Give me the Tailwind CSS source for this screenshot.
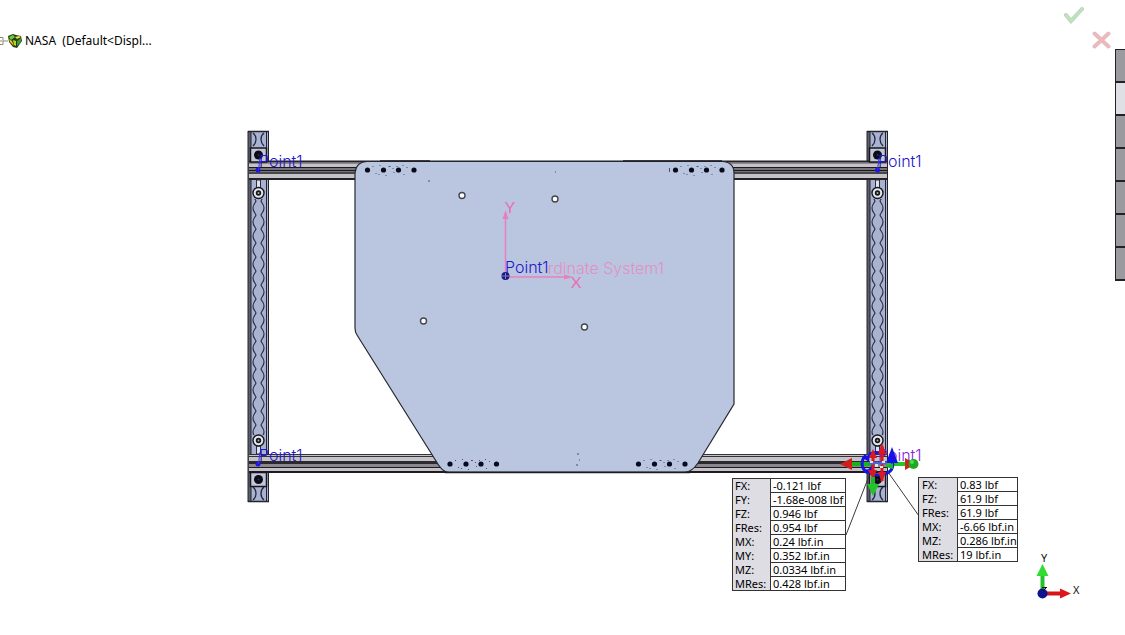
<!DOCTYPE html>
<html lang="en">
<head>
    <meta charset="UTF-8">
    <meta name="viewport" content="width=device-width, initial-scale=1.0">
    <title>NASA - Free Body Forces</title>
    <script src="https://cdn.jsdelivr.net/npm/@tailwindcss/browser@4"></script>
</head>
<body class="bg-white text-black font-['Noto_Sans',sans-serif]">
    <main class="relative min-h-screen overflow-hidden">

        <!-- Graphics area -->
        <svg class="absolute inset-0 w-full h-full" viewBox="0 0 1125 635" fill="none">
            <defs>
                <pattern id="chain" width="21" height="14" patternUnits="userSpaceOnUse">
                    <path d="M8 0C7.500 2 5 3 5 7C5 11 7.500 12 8 14 M13 0C13.500 2 16 3 16 7C16 11 13.500 12 13 14" stroke="#2b2e48" stroke-width="1.2" fill="none"/>
                </pattern>
                <!-- upright, drawn from its top left corner -->
                <g id="upright">
                    <rect x="0" y="0" width="21" height="371" fill="#a9b3cf"/>
                    <rect x="0" y="0" width="3" height="371" fill="#5c5f6b"/>
                    <path d="M0 0V371 M3 0V371 M18.500 0V371 M20.500 0V371" stroke="#22232d"/>
                    <path d="M0 0.500H21 M0 370.500H21" stroke="#22232d" stroke-width="1.5"/>
                    <rect x="4" y="68" width="14" height="236" fill="url(#chain)"/>
                    <path d="M5 2C9 5 9 11 5 15 M16 2C12 5 12 11 16 15 M5 356C9 359 9 366 5 369 M16 356C12 359 12 366 16 369" stroke="#23263f" stroke-width="1.3"/>
                </g>
                <g id="nut">
                    <rect x="-8" y="-7" width="16" height="14" fill="#c3c6d6" stroke="#16171f" stroke-width="1.5"/>
                    <circle r="4.5" fill="#0b0c18"/>
                    <circle r="1" fill="#26305c"/>
                </g>
                <g id="washer">
                    <circle r="5.5" fill="#e4e6ec" stroke="#15161c" stroke-width="1.4"/>
                    <circle r="2.7" fill="#15161c"/>
                    <circle r="1" fill="#a8b59c"/>
                </g>
                <g id="bolts" fill="#090b1c">
                    <circle cx="0" cy="0" r="2.6"/>
                    <circle cx="16" cy="0" r="2.6"/>
                    <circle cx="31" cy="0" r="2.6"/>
                    <circle cx="46.500" cy="0" r="2.6"/>
                    <path d="M5 -4h1v1h-1z M8 3h1v1h-1z M12 -5h1v1h-1z M11 4h1v1h-1z M21 -4h2v1h-2z M25 -2h1v1h-1z M26 2h1v1h-1z M35 -5h1v1h-1z M36 4h1v1h-1z M39 -3h1v1h-1z M18 5h1v1h-1z M29 -4h1v1h-1z" fill="#4c5370"/>
                </g>
            </defs>

            <use href="#upright" x="248" y="131"/>
            <use href="#upright" x="867" y="131"/>

            <!-- top rail -->
            <rect x="249" y="161" width="638" height="19" fill="#c5c3c7"/>
            <path d="M249 161.500H887 M249 179H887" stroke="#232327" stroke-width="2"/>
            <path d="M249 163.500H887" stroke="#8d8b90"/>
            <rect x="249" y="167" width="638" height="7" fill="#77757b"/>
            <path d="M249 167.500H887 M249 170.500H887 M249 173H887" stroke="#19191d"/>

            <!-- bottom rail -->
            <rect x="249" y="454" width="638" height="19" fill="#c5c3c7"/>
            <path d="M249 454.500H887 M249 456.500H887" stroke="#333338"/>
            <rect x="249" y="461" width="638" height="7" fill="#8a888d"/>
            <rect x="249" y="461" width="638" height="3" fill="#2a2a2e"/>
            <path d="M249 467.500H887" stroke="#1c1c20"/>
            <path d="M249 472H887" stroke="#1c1c20" stroke-width="2"/>

            <!-- plate -->
            <path d="M367 161.500H722Q734 162 734 173V404L698 463Q692 472 685 472H448Q442 472 436 461L357 335Q355 332 355 328V173Q356 162 367 161.500Z" fill="#bac6e0" stroke="#26282f" stroke-width="1.2"/>
            <path d="M380 161H430 M623 161H722 M445 472.500H690" stroke="#1c1c22" stroke-width="1.5"/>
            <use href="#bolts" x="367.500" y="170"/>
            <use href="#bolts" x="675.500" y="170"/>
            <use href="#bolts" x="450" y="464"/>
            <use href="#bolts" x="638.500" y="464"/>
            <path d="M669.500 168v4 M555 172h1 M428 181h2 M577 454h2 M579 460h1 M576 465h2" stroke="#4a5068"/>
            <g fill="#fff" stroke="#42464f" stroke-width="1.400">
                <circle cx="462" cy="195.500" r="3"/>
                <circle cx="555" cy="199" r="3"/>
                <circle cx="423.500" cy="321" r="3"/>
                <circle cx="584.500" cy="327" r="3"/>
            </g>

            <!-- fasteners -->
            <use href="#nut" x="258.500" y="155"/>
            <use href="#nut" x="877.500" y="155"/>
            <use href="#nut" x="258.500" y="479.500"/>
            <use href="#nut" x="877.500" y="479.500"/>
            <path d="M256.500 180v8h4v-8z M875.500 180v8h4v-8z M256.500 446v8h4v-8z M875.500 446v8h4v-8z" fill="#dfe3ee" stroke="#2a2d40"/>
            <use href="#washer" x="258.500" y="193"/>
            <use href="#washer" x="877.500" y="193"/>
            <use href="#washer" x="258.500" y="440.500"/>
            <use href="#washer" x="877.500" y="440.500"/>

            <!-- coordinate system -->
            <g stroke="#ea7fc0" stroke-width="1.500">
                <path d="M505.500 275V213 M508 277H568"/>
                <path d="M505.500 210l-3 9h6z M573 277l-9-2.500v5z" fill="#ea7fc0" stroke="none"/>
            </g>
            <g class="font-['Lato',sans-serif] text-[16px]" fill="#e96fb2">
                <text x="505" y="213">Y</text>
                <text x="571" y="288">X</text>
            </g>
            <text class="font-['Inter',sans-serif] text-[16px] font-light" x="664" y="274" text-anchor="end" fill="#e38fc4">rdinate System1</text>
            <circle cx="505.500" cy="276" r="4" fill="#1a1a78"/>
            <path d="M502 276h7 M505.500 273v6" stroke="#7f7fd0"/>

            <!-- reference points -->
            <g fill="#1f16e6">
                <circle cx="258" cy="170" r="2.500"/>
                <circle cx="877.500" cy="170" r="2.500"/>
                <circle cx="258" cy="464" r="2.500"/>
            </g>
            <path d="M258.500 170L260 158 M877.500 170L879 158 M258.500 464L260 452" stroke="#3a34e0"/>
            <g class="font-['Inter',sans-serif] text-[16px] font-light" fill="#2415cf">
                <text x="259" y="167">Point1</text>
                <text x="878" y="167">Point1</text>
                <text x="505" y="273">Point1</text>
                <text x="259" y="461">Point1</text>
                <text x="878" y="461" fill="#8424e2">Point1</text>
            </g>

            <!-- callout leaders -->
            <path d="M846 535L869 476 M888 472L919 516" stroke="#3c3c40"/>

            <!-- force and moment arrows -->
            <path d="M852 462h25v4h-25z" fill="#18b41c"/>
            <path d="M840 464l12-6v12z" fill="#cf1d17"/>
            <path d="M886 462h20v4h-20z" fill="#20c925"/>
            <path d="M905 458l11 6-11 6z" fill="#c8261b"/>
            <circle cx="913.500" cy="464" r="5" fill="#1fa622"/>
            <circle cx="912" cy="462" r="2" fill="#48e04c"/>
            <path d="M866 455C860 461 861 469 868 473 M869 454C874 452 878 452 882 453 M889 457C895 463 894 471 885 474 M866 470C871 475 878 476 885 474" stroke="#1417dd" stroke-width="3"/>
            <path d="M892 447l-6 16h12z" fill="#1511e8"/>
            <path d="M863 458l7-4-1 8z M866 472l6-7 2 8z" fill="#1511e8"/>
            <path d="M873 452v25 M882 446v35" stroke="#dc171c" stroke-width="3"/>
            <path d="M882 443l-4 11h8z M873 449l-4 9h8z M873 479l-5-9h9z M882 482l-4-10h8z" fill="#d91a22"/>
            <path d="M873 477v10" stroke="#1eb723" stroke-width="4"/>
            <path d="M873 496l-6-12h12z" fill="#23c428"/>
            <path d="M869 463h18" stroke="#5360cf" stroke-width="3"/>
            <path d="M870 461h3v2h-3z M875 464h3v3h-3z M882 461h3v2h-3z M880 466h3v2h-3z" fill="#dbe5f2"/>
            <path d="M886 467l7-4v6z" fill="#20b925"/>

            <!-- view triad -->
            <path d="M1042.500 591V574" stroke="#23c42a" stroke-width="4"/>
            <path d="M1042.500 564l-6 12h12z" fill="#30dc32"/>
            <path d="M1045 593.500h16" stroke="#d3141b" stroke-width="4"/>
            <path d="M1071 593.500l-11-5v10z" fill="#dd171c"/>
            <circle cx="1042.500" cy="593.500" r="5" fill="#11128e"/>
            <path d="M1042 587.500h5 M1046 588l-3 3" stroke="#111"/>
            <g class="font-['Noto_Sans',sans-serif] text-[11px]" fill="#111">
                <text x="1041" y="562">Y</text>
                <text x="1073" y="594">X</text>
            </g>

            <!-- result callouts -->
            <foreignObject x="732" y="478" width="114" height="115">
                <table class="w-full border-collapse border border-[#333] bg-white text-[11px] leading-[13px]" aria-label="Reaction force and moment">
                    <tbody>
                        <tr class="h-[14px]"><th class="w-[38px] bg-[#dedde4] border-r border-[#333] p-0 pl-[2px] text-left font-normal" scope="row">FX:</th><td class="border border-[#333] p-0 pl-[2px] whitespace-nowrap">-0.121 lbf</td></tr>
                        <tr class="h-[14px]"><th class="bg-[#dedde4] border-r border-[#333] p-0 pl-[2px] text-left font-normal" scope="row">FY:</th><td class="border border-[#333] p-0 pl-[2px] whitespace-nowrap">-1.68e-008 lbf</td></tr>
                        <tr class="h-[14px]"><th class="bg-[#dedde4] border-r border-[#333] p-0 pl-[2px] text-left font-normal" scope="row">FZ:</th><td class="border border-[#333] p-0 pl-[2px] whitespace-nowrap">0.946 lbf</td></tr>
                        <tr class="h-[14px]"><th class="bg-[#dedde4] border-r border-[#333] p-0 pl-[2px] text-left font-normal" scope="row">FRes:</th><td class="border border-[#333] p-0 pl-[2px] whitespace-nowrap">0.954 lbf</td></tr>
                        <tr class="h-[14px]"><th class="bg-[#dedde4] border-r border-[#333] p-0 pl-[2px] text-left font-normal" scope="row">MX:</th><td class="border border-[#333] p-0 pl-[2px] whitespace-nowrap">0.24 lbf.in</td></tr>
                        <tr class="h-[14px]"><th class="bg-[#dedde4] border-r border-[#333] p-0 pl-[2px] text-left font-normal" scope="row">MY:</th><td class="border border-[#333] p-0 pl-[2px] whitespace-nowrap">0.352 lbf.in</td></tr>
                        <tr class="h-[14px]"><th class="bg-[#dedde4] border-r border-[#333] p-0 pl-[2px] text-left font-normal" scope="row">MZ:</th><td class="border border-[#333] p-0 pl-[2px] whitespace-nowrap">0.0334 lbf.in</td></tr>
                        <tr class="h-[14px]"><th class="bg-[#dedde4] border-r border-[#333] p-0 pl-[2px] text-left font-normal" scope="row">MRes:</th><td class="border border-[#333] p-0 pl-[2px] whitespace-nowrap">0.428 lbf.in</td></tr>
                    </tbody>
                </table>
            </foreignObject>
            <foreignObject x="918" y="477" width="100" height="87">
                <table class="w-full border-collapse border border-[#333] bg-white text-[11px] leading-[13px]" aria-label="Free body force and moment">
                    <tbody>
                        <tr class="h-[14px]"><th class="w-[39px] bg-[#dedde4] border-r border-[#333] p-0 pl-[3px] text-left font-normal" scope="row">FX:</th><td class="border border-[#333] p-0 pl-[2px] whitespace-nowrap">0.83 lbf</td></tr>
                        <tr class="h-[14px]"><th class="bg-[#dedde4] border-r border-[#333] p-0 pl-[3px] text-left font-normal" scope="row">FZ:</th><td class="border border-[#333] p-0 pl-[2px] whitespace-nowrap">61.9 lbf</td></tr>
                        <tr class="h-[14px]"><th class="bg-[#dedde4] border-r border-[#333] p-0 pl-[3px] text-left font-normal" scope="row">FRes:</th><td class="border border-[#333] p-0 pl-[2px] whitespace-nowrap">61.9 lbf</td></tr>
                        <tr class="h-[14px]"><th class="bg-[#dedde4] border-r border-[#333] p-0 pl-[3px] text-left font-normal" scope="row">MX:</th><td class="border border-[#333] p-0 pl-[2px] whitespace-nowrap">-6.66 lbf.in</td></tr>
                        <tr class="h-[14px]"><th class="bg-[#dedde4] border-r border-[#333] p-0 pl-[3px] text-left font-normal" scope="row">MZ:</th><td class="border border-[#333] p-0 pl-[2px] whitespace-nowrap">0.286 lbf.in</td></tr>
                        <tr class="h-[14px]"><th class="bg-[#dedde4] border-r border-[#333] p-0 pl-[3px] text-left font-normal" scope="row">MRes:</th><td class="border border-[#333] p-0 pl-[2px] whitespace-nowrap">19 lbf.in</td></tr>
                    </tbody>
                </table>
            </foreignObject>
        </svg>

        <div class="relative flex justify-between items-start">
            <!-- feature tree -->
            <a href="#" class="flex items-center pt-[33px] text-xs">
                <svg class="w-[25px] h-4" viewBox="0 0 25 16" fill="none">
                    <path d="M-4 4.500h7v7h-7z M-2 8h4 M3 8h5" stroke="#8c8b78"/>
                    <path d="M8 3l5-2 3 1 5 1 1 5-5 7-4-1-4-5z" fill="#2c3a12"/>
                    <path d="M9 4l4-2 2 2-4 3z" fill="#5fd43c"/>
                    <path d="M9 6l3 2 2 5-4-4z" fill="#e0c62a"/>
                    <path d="M15 4l4-1 2 1-4 2z" fill="#f2da45"/>
                    <path d="M13 7l3 1v5l-2-1z" fill="#b5d42b"/>
                    <path d="M17 8l4-3v4l-4 4z" fill="#2fa036"/>
                </svg>
                <span class="whitespace-pre">NASA  (Default&lt;Displ...</span>
            </a>

            <div class="flex flex-col items-end">
                <!-- confirmation corner -->
                <div class="flex gap-2 h-[49px] pr-[14px]">
                    <button class="self-start pt-[6px]" type="button" aria-label="OK">
                        <svg class="w-5 h-[18px]" viewBox="0 0 20 18" fill="none">
                            <path d="M2 9l5 6L18 3" stroke="#c3c9c1" stroke-width="4" stroke-linecap="round"/>
                            <path d="M2 9l5 6L18 3" stroke="#b9e8b7" stroke-width="2.500" stroke-linecap="round"/>
                        </svg>
                    </button>
                    <button class="self-end" type="button" aria-label="Cancel">
                        <svg class="w-[19px] h-[18px]" viewBox="0 0 19 18" fill="none">
                            <path d="M2.500 2.500l14 13 M16.500 2.500l-14 13" stroke="#d5c3c4" stroke-width="4" stroke-linecap="round"/>
                            <path d="M2.500 2.500l14 13 M16.500 2.500l-14 13" stroke="#f3b6ba" stroke-width="2.500" stroke-linecap="round"/>
                        </svg>
                    </button>
                </div>
                <!-- task pane tabs -->
                <nav class="flex flex-col w-[10px] border-l border-t border-[#222226]" aria-label="Task pane">
                    <button class="h-[33px] border-b-2 border-[#222226] bg-[#9b9a9f]" type="button" aria-label="Resources"></button>
                    <button class="h-[33px] border-b-2 border-[#222226] bg-[#dfe0e5]" type="button" aria-label="Design Library"></button>
                    <button class="h-[33px] border-b-2 border-[#222226] bg-[#9b9a9f]" type="button" aria-label="File Explorer"></button>
                    <button class="h-[33px] border-b-2 border-[#222226] bg-[#9b9a9f]" type="button" aria-label="View Palette"></button>
                    <button class="h-[33px] border-b-2 border-[#222226] bg-[#9b9a9f]" type="button" aria-label="Appearances"></button>
                    <button class="h-[33px] border-b-2 border-[#222226] bg-[#9b9a9f]" type="button" aria-label="Custom Properties"></button>
                    <button class="h-[33px] border-b-2 border-[#222226] bg-[#9b9a9f]" type="button" aria-label="Forum"></button>
                </nav>
            </div>
        </div>
    </main>
</body>
</html>
